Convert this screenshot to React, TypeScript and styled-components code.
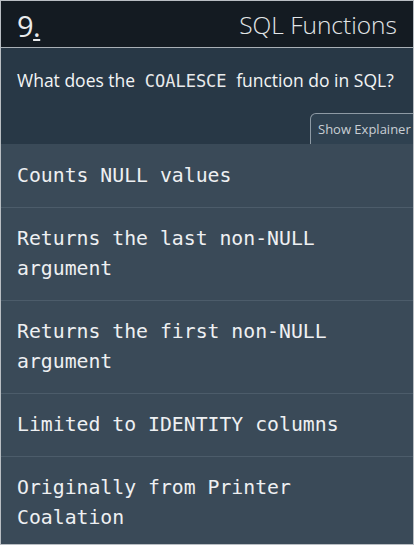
import React from "react";
import styled, { createGlobalStyle } from "styled-components";

const Global = createGlobalStyle`
  html, body { margin: 0; padding: 0; background: #3a4a58; }
  * { box-sizing: border-box; }
`;

const Card = styled.div`
  width: 414px;
  height: 545px;
  border: 1px solid #b9bec3;
  overflow: hidden;
  display: flex;
  flex-direction: column;
  background: #3a4a58;
  font-family: "Open Sans", "Lato", sans-serif;
`;

const Header = styled.header`
  height: 47px;
  flex: none;
  background: #141b22;
  border-bottom: 1px solid #a9b0b6;
  display: flex;
  align-items: center;
  justify-content: space-between;
  padding: 0 16px 0 16px;
  color: #e9ebed;
`;

const Number = styled.div`
  font-size: 29px;
  font-weight: 400;
  letter-spacing: -0.5px;
  padding-top: 3px;
`;

const Dot = styled.span`
  text-decoration: underline;
  text-decoration-thickness: 2px;
  text-underline-offset: 2px;
`;

const Topic = styled.div`
  font-size: 24.5px;
  font-weight: 300;
  color: #e3e6e8;
`;

const QuestionArea = styled.section`
  flex: none;
  height: 96px;
  background: #283846;
  display: flex;
  flex-direction: column;
`;

const Question = styled.p`
  margin: 0;
  padding: 20px 8px 0 16px;
  font-size: 17.5px;
  color: #f2f4f5;
  line-height: 24px;
  flex: 1;
  white-space: nowrap;
`;

const Code = styled.code`
  font-family: "DejaVu Sans Mono", monospace;
  font-size: 17px;
  margin: 0 5px;
  color: #e8eaec;
`;

const TabRow = styled.div`
  display: flex;
  justify-content: flex-end;
`;

const Tab = styled.button`
  height: 31px;
  width: 105px;
  margin-right: -2px;
  padding: 0 0 1px 7px;
  text-align: left;
  border: 1px solid #8e9aa4;
  border-bottom: none;
  border-top-left-radius: 6px;
  background: #2f4150;
  color: #c9cfd4;
  font-family: "Open Sans", "Lato", sans-serif;
  font-size: 13px;
  white-space: nowrap;
  cursor: pointer;
`;

const Answers = styled.ul`
  list-style: none;
  margin: 0;
  padding: 1px 0 0;
  flex: 1;
  background: #3a4a58;
`;

const Answer = styled.li`
  padding: 16px;
  border-bottom: 1px solid #4c5c6a;
  font-family: "DejaVu Sans Mono", monospace;
  font-size: 19.8px;
  line-height: 30px;
  color: #eef0f2;
`;

const answers = [
  "Counts NULL values",
  "Returns the last non-NULL argument",
  "Returns the first non-NULL argument",
  "Limited to IDENTITY columns",
  "Originally from Printer Coalation",
];

export default function App() {
  return (
    <>
      <Global />
      <Card>
        <Header>
          <Number>
            9<Dot>.</Dot>
          </Number>
          <Topic>SQL Functions</Topic>
        </Header>
        <QuestionArea>
          <Question>
            What does the <Code>COALESCE</Code> function do in SQL?
          </Question>
          <TabRow>
            <Tab>Show Explainer</Tab>
          </TabRow>
        </QuestionArea>
        <Answers>
          {answers.map((a) => (
            <Answer key={a}>{a}</Answer>
          ))}
        </Answers>
      </Card>
    </>
  );
}
